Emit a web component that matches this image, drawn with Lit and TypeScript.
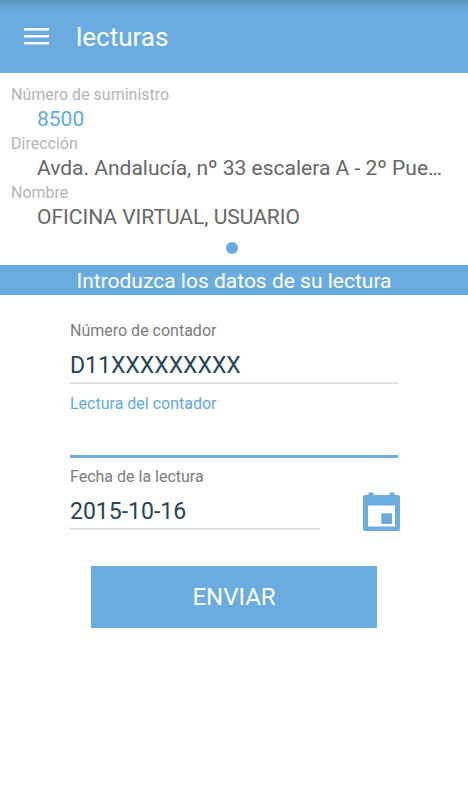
import { LitElement, html, css } from "lit";
import { customElement, state } from "lit/decorators.js";

@customElement("app-root")
class AppRoot extends LitElement {
  @state() private supply = [
    { label: "Número de suministro", value: "8500", accent: true },
    { label: "Dirección", value: "Avda. Andalucía, nº 33 escalera A - 2º Pue…", accent: false },
    { label: "Nombre", value: "OFICINA VIRTUAL, USUARIO", accent: false },
  ];

  static styles = css`
    :host {
      display: block;
      min-height: 100vh;
      background: #fff;
      color: #666;
      font-family: Roboto, sans-serif;
    }
    * { box-sizing: border-box; }
    header {
      display: flex;
      align-items: center;
      gap: 27px;
      height: 73px;
      padding: 0 24px;
      background: linear-gradient(#5a90ba, #65a4d4 6px, #6aacdf 14px);
      color: #fff;
    }
    button { border: 0; padding: 0; font: inherit; background: none; color: inherit; cursor: pointer; }
    svg { display: block; }
    h1 { margin: 0; font-size: 26px; line-height: 32px; font-weight: 400; }
    dl { margin: 0; padding: 12px 11px 0; }
    dt { font-size: 16px; line-height: 20px; color: #b4b4b4; }
    dd {
      margin: 0 10px 0 26px;
      font-size: 21px;
      line-height: 29px;
      overflow: hidden;
      white-space: nowrap;
      text-overflow: ellipsis;
    }
    .accent { color: #63a9de; }
    .pager {
      display: flex;
      justify-content: center;
      padding: 10px 5px 11px 0;
    }
    .dot {
      width: 12px;
      height: 12px;
      border-radius: 50%;
      background: #6aacdf;
    }
    h2 {
      margin: 0;
      padding-top: 2px;
      background: #6aacdf;
      color: #fff;
      text-align: center;
      font-size: 21px;
      line-height: 28px;
      font-weight: 400;
    }
    form { padding: 26px 70px 0; }
    label { display: block; font-size: 16px; line-height: 20px; }
    label:not(.accent) { color: #7c7c7c; }
    input {
      display: block;
      width: 100%;
      height: 43px;
      margin-bottom: 10px;
      padding: 7px 0 0;
      border: 0;
      border-bottom: 2px solid #e0e0e0;
      border-radius: 0;
      outline: 0;
      background: none;
      color: #264555;
      font: 23px Roboto, sans-serif;
    }
    .active { height: 44px; margin-bottom: 9px; border-bottom: 3px solid #6aacdf; }
    .date { display: flex; align-items: flex-end; gap: 43px; margin-right: -2px; }
    .field { flex: 1; }
    .calendar { margin-bottom: 8px; color: #6aacdf; }
    .send {
      display: block;
      width: calc(100% - 42px);
      height: 62px;
      margin: 26px auto 0;
      background: #6aacdf;
      color: #fff;
      font-size: 24px;
    }
  `;

  render() {
    return html`
      <header>
        <button aria-label="Menú">
          <svg width="25" height="17" viewBox="0 0 25 17" fill="currentColor"><path d="M0 0h25v2.5H0zM0 7h25v2.5H0zM0 14h25v2.5H0z" /></svg>
        </button>
        <h1>lecturas</h1>
      </header>
      <dl>
        ${this.supply.map((s) => html`<dt>${s.label}</dt><dd class=${s.accent ? "accent" : ""}>${s.value}</dd>`)}
      </dl>
      <div class="pager"><span class="dot"></span></div>
      <h2>Introduzca los datos de su lectura</h2>
      <form @submit=${(e: Event) => e.preventDefault()}>
        <label for="meter">Número de contador</label>
        <input id="meter" type="text" value="D11XXXXXXXXX" />
        <label for="reading" class="accent">Lectura del contador</label>
        <input id="reading" class="active" type="text" inputmode="numeric" />
        <div class="date">
          <div class="field">
            <label for="date">Fecha de la lectura</label>
            <input id="date" type="text" value="2015-10-16" />
          </div>
          <button class="calendar" type="button" aria-label="Elegir fecha">
            <svg width="37" height="40" viewBox="0 0 37 40" fill="currentColor"><path fill-rule="evenodd" d="M5.500 3V0.500h5V3h16V0.500h5V3H35q2 0 2 2v32q0 2-2 2H2q-2 0-2-2V5q0-2 2-2zM5 13.500V34.500h27V13.500zM18.300 21.300h10.700v10.700H18.300z" /></svg>
          </button>
        </div>
        <button class="send" type="submit">ENVIAR</button>
      </form>
    `;
  }
}
